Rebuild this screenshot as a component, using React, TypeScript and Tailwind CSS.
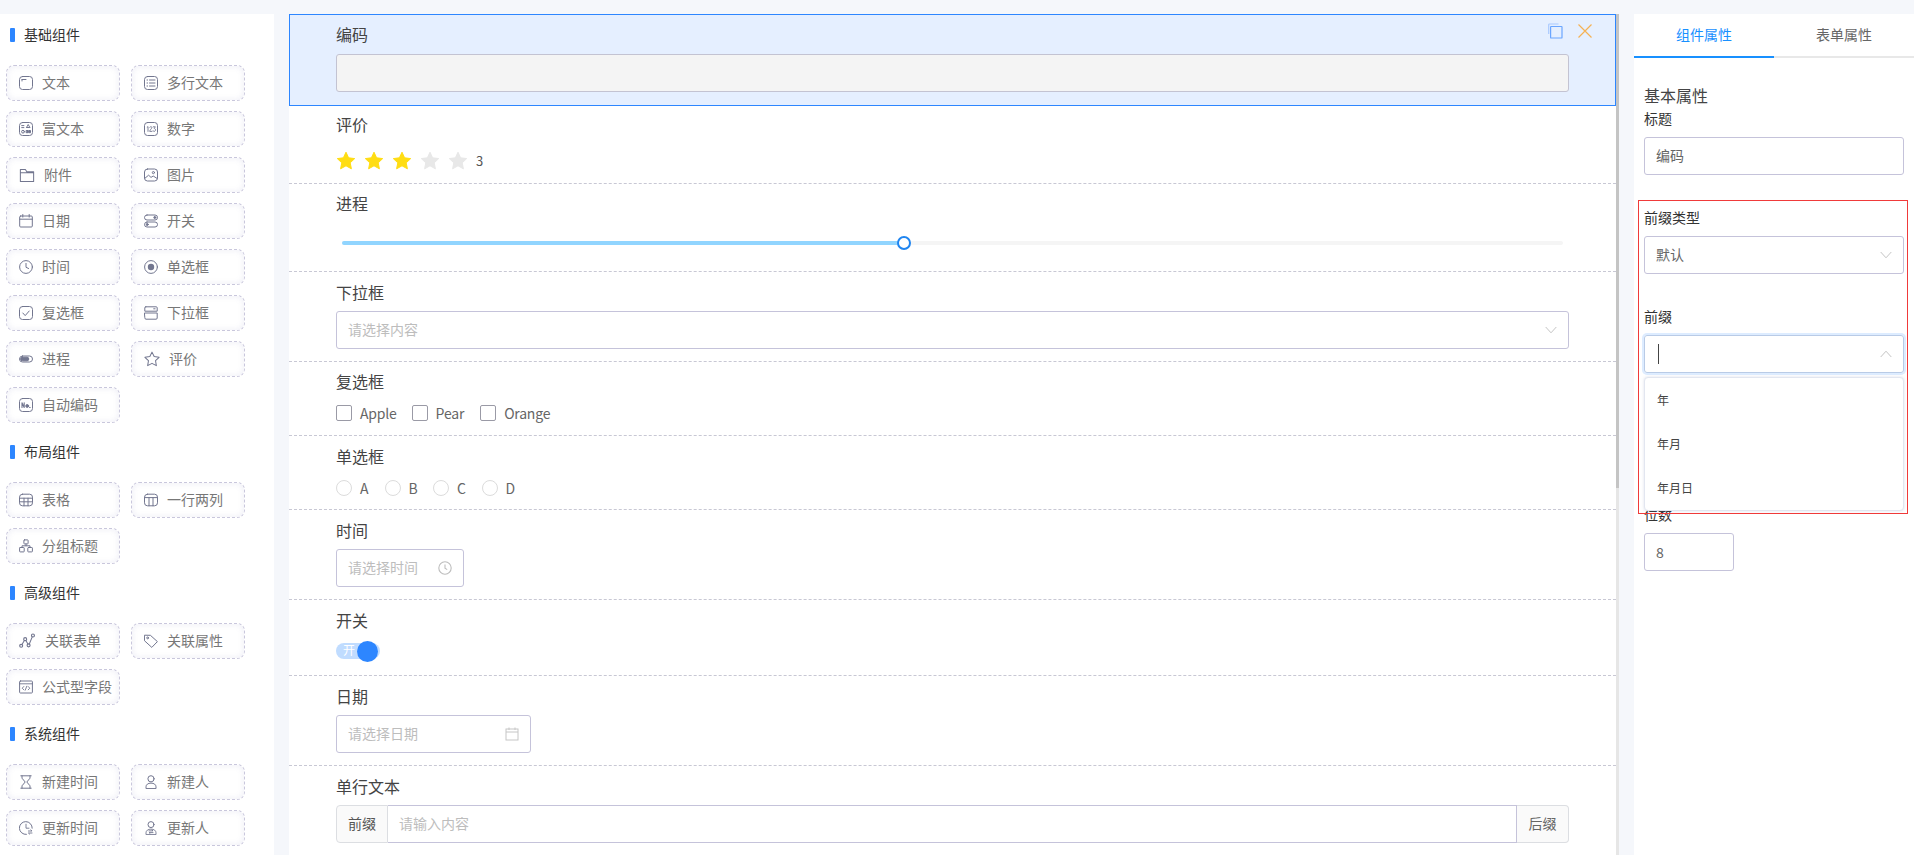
import React from "react";

const S = "#72768f";

function Ic({ children, size = 14 }: { children: React.ReactNode; size?: number }) {
  return (
    <svg width={size} height={size} viewBox="0 0 14 14" fill="none" stroke={S} strokeWidth="1" strokeLinecap="round" strokeLinejoin="round" className="shrink-0">
      {children}
    </svg>
  );
}

const RR = () => <rect x="0.5" y="0.5" width="13" height="13" rx="3" />;

const icons: Record<string, React.ReactNode> = {
  text: <Ic><RR /><path d="M3 3.5h4M3 3.5v1.5" /></Ic>,
  multi: <Ic><RR /><path d="M3 4h.6M5.5 4h5.5M3 7h.6M5.5 7h5.5M3 10h.6M5.5 10h5.5" /></Ic>,
  rich: <Ic><RR /><path d="M7.5 5.5l1.7-3 1.7 3M8 5.5h2.5" /><circle cx="4" cy="9.7" r="1.4" /><rect x="7.5" y="8.5" width="1.5" height="2.2" fill={S} /><rect x="10" y="8.5" width="1.5" height="2.2" fill={S} /><path d="M2.7 3.6h2.2M2.7 5.6h2.2" /></Ic>,
  num: <Ic><RR /><path d="M3.2 5.2l.8-.6v4.8M5.8 5.2c.4-.8 2-.8 2.1.3 0 1-2.1 2.3-2.2 3.9h2.3M9.3 4.8h2l-1.1 1.7c1.8 0 1.8 2.9-.1 2.9-.5 0-.9-.2-1-.6" strokeWidth="0.9" /></Ic>,
  folder: <Ic size={16}><path d="M1.2 12.6V2.2h4.4l1.2 1.9h6V12.6z M1.2 5h11.6" strokeWidth="0.9" /></Ic>,
  image: <Ic><rect x="0.5" y="1" width="13" height="12" rx="3" /><circle cx="9.4" cy="4.6" r="1.1" /><path d="M1 10.2l3.6-3 2.4 2.2 2.2-1.4 3.8 2.4" /></Ic>,
  date: <Ic><rect x="0.7" y="2" width="12.6" height="11" rx="1" /><path d="M0.7 5.2h12.6M3.8 0.5v2.6M10.2 0.5v2.6" /></Ic>,
  toggle: <Ic><rect x="0.5" y="1" width="13" height="5" rx="2.5" /><rect x="0.5" y="8" width="13" height="5" rx="2.5" /><circle cx="10.8" cy="3.5" r="1" fill={S} /><circle cx="3.2" cy="10.5" r="1" fill={S} /></Ic>,
  clock: <Ic><circle cx="7" cy="7" r="6.4" /><path d="M7 3.4V7.3l2.6 1.2" /></Ic>,
  radio: <Ic><circle cx="7" cy="7" r="6.4" /><circle cx="7" cy="7" r="3.2" fill={S} stroke="none" /></Ic>,
  check: <Ic><RR /><path d="M3.8 7l2.4 2.6 4-4.6" /></Ic>,
  select: <Ic><path d="M1.8 0.8h10.4a1 1 0 0 1 1 1v3.4H0.8V1.8a1 1 0 0 1 1-1zM0.8 7h12.4v5a1.2 1.2 0 0 1-1.2 1.2H2A1.2 1.2 0 0 1 0.8 12zM9.7 2.8h1.4" /></Ic>,
  progress: <Ic><rect x="0.5" y="4" width="13" height="6" rx="3" /><rect x="1.6" y="5.2" width="8.2" height="3.6" rx="1.8" fill={S} /></Ic>,
  star: <Ic size={16}><path d="M7 1l1.9 3.9 4.3.6-3.1 3 .7 4.3L7 10.8l-3.8 2 .7-4.3-3.1-3 4.3-.6z" strokeWidth="0.9" /></Ic>,
  no: <Ic><RR /><path d="M3 9.5V4.8l2.2 4.7V4.8" strokeWidth="1.1" /><circle cx="8.2" cy="8" r="1.4" fill={S} /><path d="M10.6 9.5h.5" strokeWidth="1.2" /></Ic>,
  table: <Ic><rect x="0.5" y="1.2" width="13" height="11.6" rx="3" /><path d="M0.5 5.2h13M0.5 8.8h13M5 5.2v7.6M9 5.2v7.6" /></Ic>,
  cols: <Ic><rect x="0.5" y="1.2" width="13" height="11.6" rx="3" /><path d="M0.5 4.6h13M5 4.6v8.2M9 4.6v8.2" /></Ic>,
  tree: <Ic><path d="M5.4 0.9h3.2a.5.5 0 0 1 .5.5v3a.5.5 0 0 1-.5.5H5.4a.5.5 0 0 1-.5-.5v-3a.5.5 0 0 1 .5-.5z" /><rect x="0.6" y="8.5" width="4.6" height="4.4" rx="0.6" /><rect x="8.8" y="8.5" width="4.6" height="4.4" rx="0.6" /><path d="M7 5v1.8M3 8.5V6.8h8v1.7" /></Ic>,
  rel: <Ic size={16}><circle cx="1.9" cy="11.2" r="1.3" /><circle cx="5.4" cy="5.4" r="1.3" /><circle cx="8.4" cy="10.8" r="1.3" /><circle cx="12.2" cy="2.2" r="1.3" /><path d="M2.6 10.1l2.1-3.6M6 6.6l1.8 3.1M9 9.6l2.6-6.2" strokeWidth="0.9" /></Ic>,
  tag: <Ic><path d="M0.8 1.2l5.6.1 7 6.3-5.6 5.8-7-6.4z" /><circle cx="3.6" cy="3.9" r="0.9" /></Ic>,
  formula: <Ic><rect x="0.6" y="1" width="12.8" height="12" rx="0.8" /><path d="M0.6 3.8h12.8M4.8 6.5L3.2 8.2l1.6 1.6M9.2 6.5l1.6 1.7-1.6 1.6M7.8 6.2L6.2 10.2" strokeWidth="0.9" /></Ic>,
  hour: <Ic><path d="M1.8 0.8h10.4M1.8 13.2h10.4M3 0.8v2.4L6.2 7 3 10.8v2.4M11 0.8v2.4L7.8 7l3.2 3.8v2.4" /></Ic>,
  user: <Ic><circle cx="7" cy="3.8" r="3.1" /><path d="M2 13.2v-1.4c0-2.2 2-3.7 5-3.7s5 1.5 5 3.7v1.4z" /></Ic>,
  upclock: <Ic><path d="M13.2 7.2A6.4 6.4 0 1 0 7.4 13.4" /><path d="M7 3.2v4h3M9.4 10h3.6l-1.2-1.1M13 12H9.4l1.2 1.1" strokeWidth="0.9" /></Ic>,
  upuser: <Ic><circle cx="7" cy="3.6" r="3" /><path d="M2 13.2v-1.4c0-2.2 2-3.7 5-3.7s5 1.5 5 3.7v1.4zM5 9.9h4l-1-.8M9 11.6H5l1 .8" strokeWidth="0.9" /></Ic>,
};

function Item({ icon, label, gap = "gap-[9px]" }: { icon: string; label: string; gap?: string }) {
  return (
    <div className={`flex h-[36px] w-[114px] items-center ${gap} rounded-[8px] border border-dashed border-[#c9c7dc] pl-[12px] text-[14px] leading-[20px] whitespace-nowrap text-[#777] shadow-[inset_0_0_6px_rgba(110,110,170,0.12)]`}>
      {icons[icon]}
      <span className="pb-[2px]">{label}</span>
    </div>
  );
}

function Section({ title, items, first }: { title: string; items: { icon: string; label: string; gap?: string }[]; first?: boolean }) {
  return (
    <div className={first ? "" : "mt-[8px]"}>
      <div className="mb-[9px] flex h-[42px] items-center pl-[10px]">
        <span className="mr-[9px] h-[14px] w-[5px] rounded-[1px] bg-[#2d86ff]" />
        <span className="pb-[2px] text-[14px] leading-[20px] text-[#333]">{title}</span>
      </div>
      <div className="grid grid-cols-[114px_114px] gap-x-[11px] gap-y-[10px] pl-[6px]">
        {items.map((it) => (
          <Item key={it.label} {...it} />
        ))}
      </div>
    </div>
  );
}

function Chevron({ up, className = "" }: { up?: boolean; className?: string }) {
  return (
    <svg width="12" height="8" viewBox="0 0 12 8" fill="none" stroke="#c4c4c4" strokeWidth="1" className={className}>
      <path d={up ? "M0.7 7L6 1.2 11.3 7" : "M0.7 1L6 6.8 11.3 1"} />
    </svg>
  );
}

function Star({ on }: { on: boolean }) {
  return (
    <svg width="20" height="19" viewBox="0 0 20 19" className="shrink-0">
      <path
        d="M10 1.2l2.6 5.6 6.1.8-4.5 4.2 1.2 6-5.4-3-5.4 3 1.2-6L1.3 7.6l6.1-.8z"
        fill={on ? "#ffdd13" : "#e8e8e8"}
        stroke={on ? "#ffdd13" : "#e8e8e8"}
        strokeLinejoin="round"
      />
    </svg>
  );
}

const Label = ({ children }: { children: React.ReactNode }) => (
  <div className="h-[22px] text-[16px] leading-[20px] text-[#444]">{children}</div>
);

const T = ({ children }: { children: React.ReactNode }) => <span className="pb-[2px] leading-[20px]">{children}</span>;

const rowCls = "border-b border-dashed border-[#c8c8d4] pl-[47px] pr-[47px]";
const boxCls = "flex h-[38px] items-center rounded-[3px] border border-[#c5c3da] px-[11px] text-[14px]";

function PanelField({ label, children, className = "" }: { label: string; children: React.ReactNode; className?: string }) {
  return (
    <div className={className}>
      <div className="mb-[7px] h-[22px] text-[14px] leading-[20px] text-[#333]">{label}</div>
      {children}
    </div>
  );
}

export default function App() {
  return (
    <div
      className="relative flex h-[855px] w-[1914px] overflow-hidden bg-[#f5f7fb] pt-[14px]"
      style={{ fontFamily: '"Noto Sans CJK SC", "Noto Sans", sans-serif' }}
    >
      {/* left */}
      <aside className="h-full w-[274px] shrink-0 overflow-hidden bg-white">
        <Section
          first
          title="基础组件"
          items={[
            { icon: "text", label: "文本" },
            { icon: "multi", label: "多行文本" },
            { icon: "rich", label: "富文本" },
            { icon: "num", label: "数字" },
            { icon: "folder", label: "附件" },
            { icon: "image", label: "图片" },
            { icon: "date", label: "日期" },
            { icon: "toggle", label: "开关" },
            { icon: "clock", label: "时间" },
            { icon: "radio", label: "单选框" },
            { icon: "check", label: "复选框" },
            { icon: "select", label: "下拉框" },
            { icon: "progress", label: "进程" },
            { icon: "star", label: "评价" },
            { icon: "no", label: "自动编码" },
          ]}
        />
        <Section
          title="布局组件"
          items={[
            { icon: "table", label: "表格" },
            { icon: "cols", label: "一行两列" },
            { icon: "tree", label: "分组标题" },
          ]}
        />
        <Section
          title="高级组件"
          items={[
            { icon: "rel", label: "关联表单", gap: "gap-[10px]" },
            { icon: "tag", label: "关联属性" },
            { icon: "formula", label: "公式型字段" },
          ]}
        />
        <Section
          title="系统组件"
          items={[
            { icon: "hour", label: "新建时间" },
            { icon: "user", label: "新建人" },
            { icon: "upclock", label: "更新时间" },
            { icon: "upuser", label: "更新人" },
          ]}
        />
      </aside>

      {/* center */}
      <main className="ml-[15px] flex h-full w-[1330px] shrink-0">
        <div className="h-full w-[1327px] overflow-hidden bg-white">
          <div className="relative h-[92px] border border-[#2d86ff] bg-[#e5efff] pl-[46px] pr-[46px] pt-[9px]">
            <Label>编码</Label>
            <div className="mt-[8px] h-[38px] rounded-[3px] border border-[#c3c3d2] bg-[#f4f4f4]" />
            <div className="absolute right-[23px] top-[8px] flex items-center gap-[15px]">
              <svg width="15" height="16" viewBox="0 0 15 16" fill="none" stroke="#6aa5ff" strokeWidth="1.2">
                <rect x="2.6" y="3.5" width="11.4" height="11.5" rx="0.6" />
                <path d="M0.7 11V1.8a.8.8 0 0 1 .8-.8H10.5" stroke="#a9c9ff" />
              </svg>
              <svg width="14" height="14" viewBox="0 0 14 14" fill="none" stroke="#f5b254" strokeWidth="1.2">
                <path d="M0.5 0.5l13 13M13.5 0.5l-13 13" />
              </svg>
            </div>
          </div>

          <div className={`h-[78px] pt-[8px] ${rowCls}`}>
            <Label>评价</Label>
            <div className="mt-[15px] flex items-center gap-[8px]">
              {[1, 2, 3, 4, 5].map((n) => (
                <Star key={n} on={n <= 3} />
              ))}
              <span className="text-[13px] leading-[19px] text-[#555]">3</span>
            </div>
          </div>

          <div className={`h-[88px] pt-[9px] ${rowCls}`}>
            <Label>进程</Label>
            <div className="relative mx-[6px] mt-[26px] flex h-[4px] w-[1221px] rounded-full bg-[#f5f5f5]">
              <div className="h-[4px] w-[561px] rounded-full bg-[#91d5ff]" />
              <div className="absolute left-[555px] top-[-5px] h-[14px] w-[14px] rounded-full border-2 border-[#1f85f0] bg-white" />
            </div>
          </div>

          <div className={`h-[90px] pt-[10px] ${rowCls}`}>
            <Label>下拉框</Label>
            <div className={`mt-[7px] justify-between text-[#bdbdbd] ${boxCls}`}>
              <T>请选择内容</T>
              <Chevron />
            </div>
          </div>

          <div className={`h-[74px] pt-[9px] ${rowCls}`}>
            <Label>复选框</Label>
            <div className="mt-[12px] flex h-[16px] items-center text-[14px] leading-[16px] tracking-[-0.2px] text-[#666]">
              {[
                ["Apple", "mr-[15px]"],
                ["Pear", "mr-[16px]"],
                ["Orange", ""],
              ].map(([t, m]) => (
                <label key={t} className={`flex items-center gap-[8px] ${m}`}>
                  <span className="h-[16px] w-[16px] rounded-[2px] border border-[#9a9aa6] bg-white" />
                  <span>{t}</span>
                </label>
              ))}
            </div>
          </div>

          <div className={`h-[74px] pt-[10px] ${rowCls}`}>
            <Label>单选框</Label>
            <div className="mt-[12px] flex h-[16px] items-center text-[14px] leading-[16px] text-[#666]">
              {["A", "B", "C", "D"].map((t) => (
                <label key={t} className="flex w-[48.5px] items-center gap-[8px]">
                  <span className="h-[16px] w-[16px] rounded-full border border-[#dcdcdc] bg-white" />
                  <span>{t}</span>
                </label>
              ))}
            </div>
          </div>

          <div className={`h-[90px] pt-[10px] ${rowCls}`}>
            <Label>时间</Label>
            <div className={`mt-[7px] w-[128px] justify-between text-[#bdbdbd] ${boxCls}`}>
              <T>请选择时间</T>
              <svg width="14" height="14" viewBox="0 0 14 14" fill="none" stroke="#bdbdbd" strokeWidth="1.1">
                <circle cx="7" cy="7" r="6.2" />
                <path d="M7 3.4V7.2l2.2 1.4" />
              </svg>
            </div>
          </div>

          <div className={`h-[76px] pt-[10px] ${rowCls}`}>
            <Label>开关</Label>
            <div className="relative mt-[11px] h-[16px] w-[44px] rounded-full bg-[#c0dcff]">
              <span className="absolute left-[7px] top-[-1px] text-[12px] leading-[16px] text-white">开</span>
              <span className="absolute left-[21px] top-[-2.5px] h-[21px] w-[21px] rounded-full bg-[#2d86ff]" />
            </div>
          </div>

          <div className={`h-[90px] pt-[10px] ${rowCls}`}>
            <Label>日期</Label>
            <div className={`mt-[7px] w-[195px] justify-between text-[#bdbdbd] ${boxCls}`}>
              <T>请选择日期</T>
              <svg width="14" height="14" viewBox="0 0 14 14" fill="none" stroke="#c6c6c6" strokeWidth="1">
                <rect x="1" y="2" width="12" height="11" />
                <path d="M1 5h12M4 0.5V3M10 0.5V3" />
              </svg>
            </div>
          </div>

          <div className="pl-[47px] pr-[47px] pt-[10px]">
            <Label>单行文本</Label>
            <div className="mt-[7px] flex h-[38px] text-[14px]">
              <div className="flex w-[52px] items-center justify-center rounded-l-[4px] border border-[#dcdee2] bg-[#fafafa] text-[#555]"><T>前缀</T></div>
              <div className="flex flex-1 items-center border-y border-r border-[#c5c3da] px-[11px] text-[#bdbdbd]"><T>请输入内容</T></div>
              <div className="flex w-[52px] items-center justify-center rounded-r-[4px] border-y border-r border-[#dcdee2] bg-[#fafafa] text-[#666]"><T>后缀</T></div>
            </div>
          </div>
        </div>
        <div className="flex h-full w-[3px] flex-col bg-[#e6e6e6]">
          <div className="h-[474px] bg-[#c4c4c4]" />
        </div>
      </main>

      {/* right */}
      <aside className="relative ml-[15px] h-full w-[280px] shrink-0 bg-white">
        <div className="flex h-[44px] border-b-2 border-[#e8e8e8]">
          <div className="mb-[-2px] flex h-[44px] w-[140px] items-center justify-center border-b-2 border-[#1890ff] text-[14px] text-[#1890ff]"><T>组件属性</T></div>
          <div className="flex h-[42px] w-[140px] items-center justify-center text-[14px] text-[#666]"><T>表单属性</T></div>
        </div>
        <div className="pl-[10px] pr-[10px] pt-[27px]">
          <div className="mb-[1px] h-[22px] text-[16px] leading-[20px] text-[#444]">基本属性</div>
          <PanelField label="标题">
            <div className={`text-[#666] ${boxCls}`}><T>编码</T></div>
          </PanelField>
          <PanelField label="前缀类型" className="mt-[32px]">
            <div className={`justify-between text-[#666] ${boxCls}`}>
              <T>默认</T>
              <Chevron />
            </div>
          </PanelField>
          <PanelField label="前缀" className="relative z-10 mt-[32px]">
            <div className="relative">
              <div className="flex h-[38px] items-center justify-between rounded-[3px] border border-[#b9cbe6] px-[11px] shadow-[0_0_0_2px_rgba(45,134,255,0.16)]">
                <span className="ml-[2px] h-[20px] w-px bg-[#444]" />
                <Chevron up />
              </div>
              <div className="absolute left-0 right-0 top-[42px] h-[134px] rounded-[4px] border border-[#e2e6f0] bg-white py-px text-[12px] text-[#444] shadow-[0_0_3px_rgba(120,130,170,0.25)]">
                {["年", "年月", "年月日"].map((t) => (
                  <div key={t} className="flex h-[44px] items-center pl-[12px]"><T>{t}</T></div>
                ))}
              </div>
            </div>
          </PanelField>
          <PanelField label="位数" className="mt-[131px]">
            <div className={`w-[90px] text-[#666] ${boxCls}`}>8</div>
          </PanelField>
        </div>
        <div className="pointer-events-none absolute left-[4px] top-[186px] z-20 h-[314px] w-[270px] border border-[#f03a3a]" />
      </aside>
    </div>
  );
}
